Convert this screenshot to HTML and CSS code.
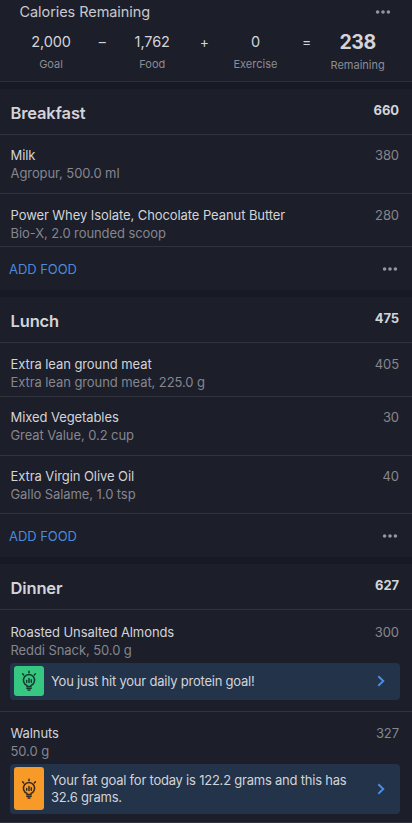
FILE: index.html
```html
<!DOCTYPE html>
<html lang="en">
<head>
<meta charset="utf-8">
<title>Food Diary</title>
<link rel="stylesheet" href="styles.css">
</head>
<body>
<svg width="0" height="0" class="defs">
  <symbol id="dots" viewBox="0 0 16 6"><circle cx="2.6" cy="3" r="1.8"/><circle cx="8" cy="3" r="1.8"/><circle cx="13.4" cy="3" r="1.8"/></symbol>
  <symbol id="bulb" viewBox="0 0 18 22">
    <g fill="none" stroke-width="1.5" stroke-linecap="round">
      <path d="M7 16.6v-1.2a5.6 5.6 0 1 1 4 0v1.2z"/>
      <path d="M9 1.2v1.6M2.6 3.8l1.1 1.2M15.4 3.8l-1.1 1.2"/>
      <path d="M6.7 10.6v1.6M9 8.4v4.2M11.3 9.8v2.4M6.8 18.2h4.4M8 20h2"/>
    </g>
  </symbol>
  <symbol id="chevron" viewBox="0 0 8 12"><path d="M1.3 1.2 6.3 6l-5 4.8" fill="none" stroke="#4a8fe7" stroke-width="1.9"/></symbol>
</svg>
<header class="summary">
  <div class="summary-top"><h1>Calories Remaining</h1><svg class="dots"><use href="#dots"/></svg></div>
  <div class="equation">
    <div class="term"><b>2,000</b><span>Goal</span></div>
    <div class="op">–</div>
    <div class="term"><b>1,762</b><span>Food</span></div>
    <div class="op">+</div>
    <div class="term"><b>0</b><span>Exercise</span></div>
    <div class="op">=</div>
    <div class="term total"><b>238</b><span>Remaining</span></div>
  </div>
</header>
<section class="meal">
  <div class="meal-head"><h2>Breakfast</h2><strong>660</strong></div>
  <div class="food tall"><div><p>Milk</p><small>Agropur, 500.0 ml</small></div><span class="cal">380</span></div>
  <div class="food"><div><p>Power Whey Isolate, Chocolate Peanut Butter</p><small>Bio-X, 2.0 rounded scoop</small></div><span class="cal">280</span></div>
  <div class="add"><a>ADD FOOD</a><svg class="dots"><use href="#dots"/></svg></div>
</section>
<section class="meal">
  <div class="meal-head"><h2>Lunch</h2><strong>475</strong></div>
  <div class="food first"><div><p>Extra lean ground meat</p><small>Extra lean ground meat, 225.0 g</small></div><span class="cal">405</span></div>
  <div class="food tall"><div><p>Mixed Vegetables</p><small>Great Value, 0.2 cup</small></div><span class="cal">30</span></div>
  <div class="food medium"><div><p>Extra Virgin Olive Oil</p><small>Gallo Salame, 1.0 tsp</small></div><span class="cal">40</span></div>
  <div class="add"><a>ADD FOOD</a><svg class="dots"><use href="#dots"/></svg></div>
</section>
<section class="meal">
  <div class="meal-head"><h2>Dinner</h2><strong>627</strong></div>
  <div class="food noted"><div><p>Roasted Unsalted Almonds</p><small>Reddi Snack, 50.0 g</small></div><span class="cal">300</span>
    <div class="tip"><i class="badge green"><svg><use href="#bulb"/></svg></i><em>You just hit your daily protein goal!</em><svg class="chevron"><use href="#chevron"/></svg></div>
  </div>
  <div class="food noted last"><div><p>Walnuts</p><small>50.0 g</small></div><span class="cal">327</span>
    <div class="tip"><i class="badge orange"><svg><use href="#bulb"/></svg></i><em>Your fat goal for today is 122.2 grams and this has 32.6 grams.</em><svg class="chevron"><use href="#chevron"/></svg></div>
  </div>
</section>
</body>
</html>
```
FILE: styles.css
```css
* { box-sizing: border-box; margin: 0; padding: 0; }
body { width: 412px; height: 823px; overflow: hidden; background: #171923; font-family: Inter, sans-serif; font-size: 13px; letter-spacing: -0.08px; color: #d3d4d9; }
.defs { display: none; }
.dots { width: 16px; height: 6px; fill: #95969f; display: block; }
.summary { height: 82px; background: #1c1e29; border-bottom: 1px solid #2c2e39; }
.summary-top { display: flex; justify-content: space-between; align-items: center; height: 23px; padding: 0 21px 0 19.5px; }
.summary h1 { font-size: 14.5px; font-weight: 400; line-height: 23px; letter-spacing: -0.07px; color: #c8c9cf; }
.equation { display: grid; grid-template-columns: repeat(7, 51.1px); margin-left: 25.5px; height: 58px; text-align: center; }
.term { display: flex; flex-direction: column; align-items: center; padding-top: 9px; }
.term b { font-size: 14.5px; font-weight: 400; line-height: 20px; }
.term span { font-size: 11px; line-height: 14px; margin-top: 5px; letter-spacing: 0; color: #8b8c96; }
.term:nth-child(3) { margin-left: -2px; }
.total b { font-size: 19.5px; font-weight: 700; letter-spacing: -0.4px; }
.total span { margin-top: 6px; }
.op { font-size: 14px; line-height: 20px; padding-top: 9px; }
.meal { margin-top: 7px; background: #1c1e29; }
.meal-head { display: flex; justify-content: space-between; height: 46px; padding: 13px 13px 0 10.5px; border-bottom: 1px solid #30323d; }
.meal-head h2 { font-size: 16.5px; font-weight: 600; line-height: 22px; letter-spacing: -0.15px; }
.meal-head strong { font-size: 13px; font-weight: 700; line-height: 16px; }
.food { display: flex; flex-wrap: wrap; align-content: flex-start; justify-content: space-between; height: 53px; padding: 12px 13px 0 10.5px; border-bottom: 1px solid #30323d; }
.food.first { height: 54px; }
.food.tall { height: 59px; padding-top: 11px; }
.food.medium { height: 58px; padding-top: 11px; }
.food p { line-height: 19px; }
.food small { display: block; font-size: 13px; line-height: 17px; color: #85868f; }
.cal { line-height: 19px; color: #85868f; }
.add { display: flex; justify-content: space-between; align-items: center; height: 43px; padding: 0 14px 0 9px; }
.add a { color: #4a8bdc; letter-spacing: -0.05px; }
.food.noted { height: 102px; padding-top: 13px; }
.food.last { height: 111px; padding-top: 12px; }
.tip { display: flex; align-items: center; width: 390px; min-height: 37px; margin: 4px -1px 0 -0.5px; padding: 3px 15px 4px 4px; border-radius: 4px; background: #23334a; }
.last .tip { min-height: 50px; }
.badge { display: flex; align-items: center; justify-content: center; align-self: stretch; width: 30px; margin-right: 7px; border-radius: 3px; flex: none; }
.badge svg { width: 18px; height: 22px; }
.green { background: #36c880; stroke: #15392f; }
.orange { background: #f89a28; stroke: #382a1c; }
.tip em { flex: 1; padding-right: 20px; font-style: normal; line-height: 17px; letter-spacing: -0.22px; }
.chevron { width: 8px; height: 12px; }
```
